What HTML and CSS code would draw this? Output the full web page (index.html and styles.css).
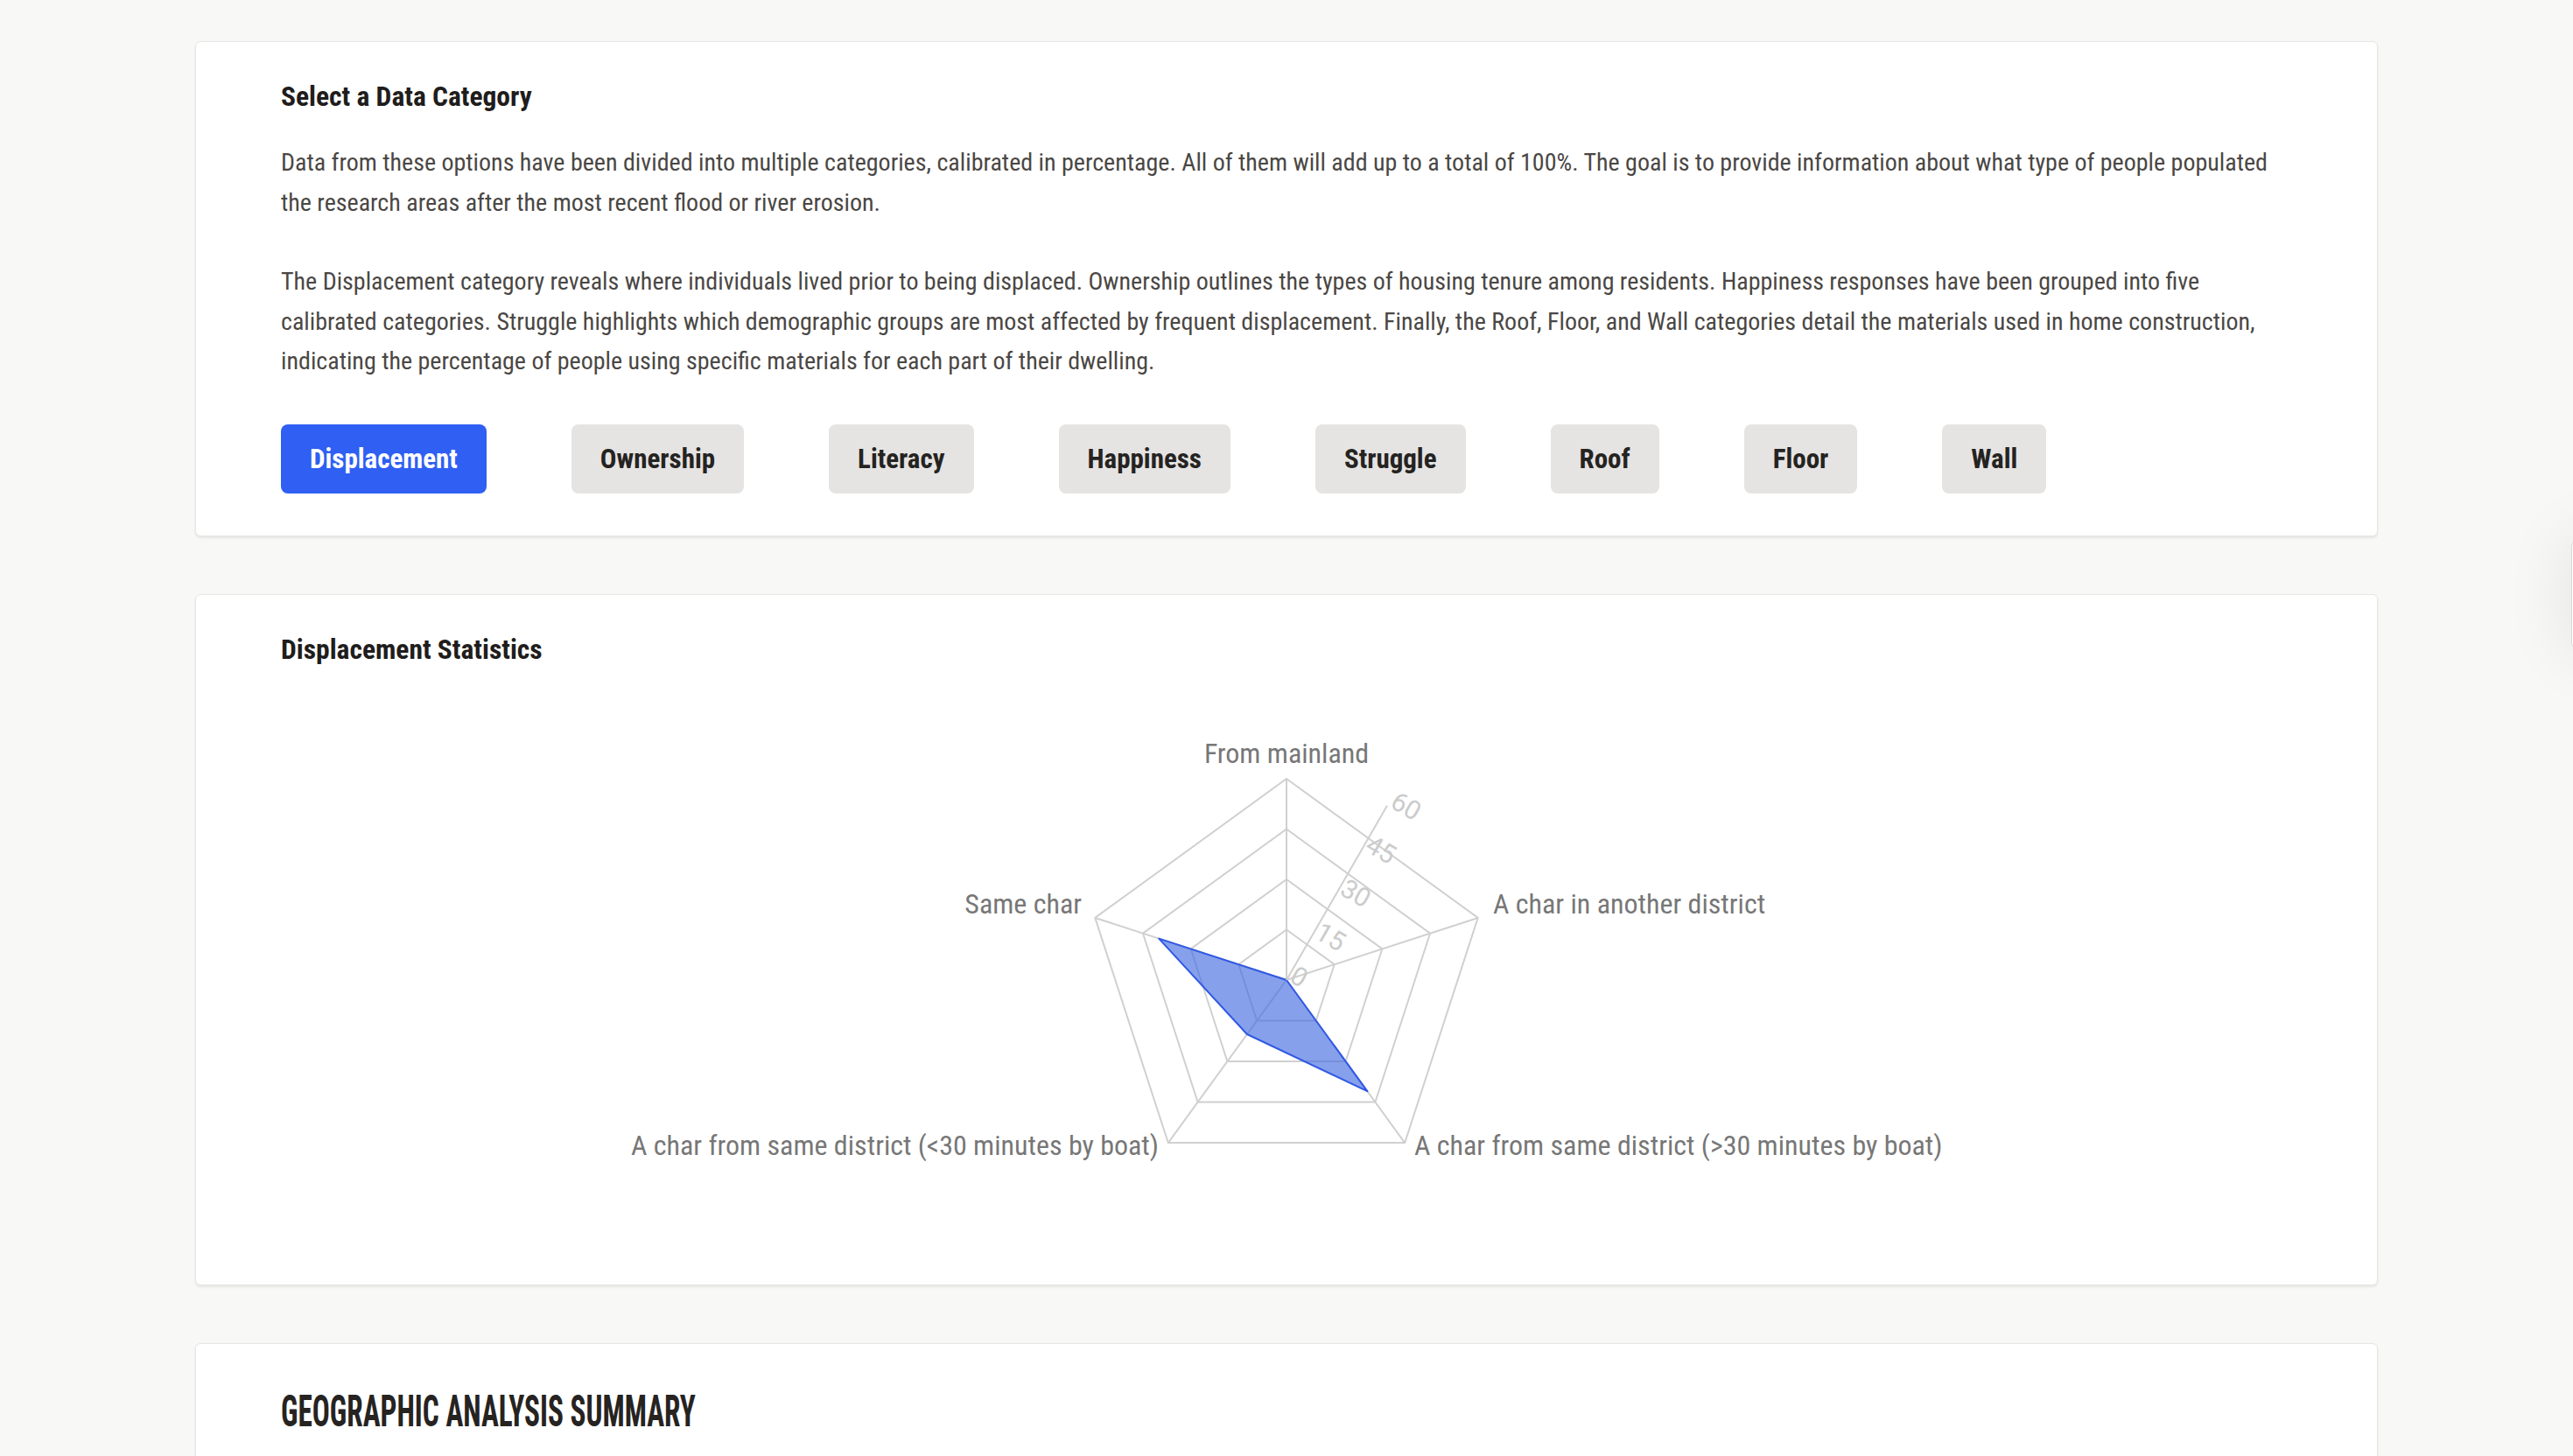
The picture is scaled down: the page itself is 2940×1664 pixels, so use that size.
FILE: index.html
```html
<!DOCTYPE html>
<html lang="en">
<head>
<meta charset="utf-8">
<title>Data Categories</title>
<link rel="stylesheet" href="styles.css">
</head>
<body>
<main class="page">
  <section class="card">
    <h2 class="card-title">Select a Data Category</h2>
    <p class="intro">Data from these options have been divided into multiple categories, calibrated in percentage. All of them will add up to a total of 100%. The goal is to provide information about what type of people populated the research areas after the most recent flood or river erosion.</p>
    <p class="intro last">The Displacement category reveals where individuals lived prior to being displaced. Ownership outlines the types of housing tenure among residents. Happiness responses have been grouped into five calibrated categories. Struggle highlights which demographic groups are most affected by frequent displacement. Finally, the Roof, Floor, and Wall categories detail the materials used in home construction, indicating the percentage of people using specific materials for each part of their dwelling.</p>
    <div class="btn-row">
      <button class="cat-btn active">Displacement</button>
      <button class="cat-btn">Ownership</button>
      <button class="cat-btn">Literacy</button>
      <button class="cat-btn">Happiness</button>
      <button class="cat-btn">Struggle</button>
      <button class="cat-btn">Roof</button>
      <button class="cat-btn">Floor</button>
      <button class="cat-btn">Wall</button>
    </div>
  </section>

  <section class="card">
    <h2 class="card-title">Displacement Statistics</h2>
    <svg class="radar" viewBox="0 14 2298 625" width="2298" height="625" xmlns="http://www.w3.org/2000/svg">
      <g class="grid">
        <polygon points="1149,281.5 1203.69,321.23 1182.80,385.52 1115.20,385.52 1094.31,321.23"/>
        <polygon points="1149,224 1258.37,303.46 1216.60,432.04 1081.40,432.04 1039.63,303.46"/>
        <polygon points="1149,166.5 1313.06,285.69 1250.39,478.56 1047.61,478.56 984.94,285.69"/>
        <polygon points="1149,109 1367.74,267.93 1284.19,525.07 1013.81,525.07 930.26,267.93"/>
        <line x1="1149" y1="339" x2="1149" y2="109"/>
        <line x1="1149" y1="339" x2="1367.74" y2="267.93"/>
        <line x1="1149" y1="339" x2="1284.19" y2="525.07"/>
        <line x1="1149" y1="339" x2="1013.81" y2="525.07"/>
        <line x1="1149" y1="339" x2="930.26" y2="267.93"/>
      </g>
      <polygon class="data" points="1149,339 1149,339 1241.38,466.15 1103.94,401.02 1003.17,291.62"/>
      <line class="raxis" x1="1149" y1="339" x2="1264" y2="139.8"/>
      <g class="ticks">
        <text transform="translate(1151,340) rotate(30)">0</text>
        <text transform="translate(1179.75,290.2) rotate(30)">15</text>
        <text transform="translate(1208.5,240.4) rotate(30)">30</text>
        <text transform="translate(1237.25,190.6) rotate(30)">45</text>
        <text transform="translate(1266,140.8) rotate(30)">60</text>
      </g>
      <g class="labels">
        <text x="1149" y="80" text-anchor="middle">From mainland</text>
        <text x="915" y="252" text-anchor="end">Same char</text>
        <text x="1385" y="252" text-anchor="start">A char in another district</text>
        <text x="1003" y="528" text-anchor="end">A char from same district (&lt;30 minutes by boat)</text>
        <text x="1295" y="528" text-anchor="start">A char from same district (&gt;30 minutes by boat)</text>
      </g>
    </svg>
  </section>

  <section class="card summary">
    <h2 class="summary-title">Geographic Analysis Summary</h2>
  </section>
</main>
<div class="side-panel"></div>
</body>
</html>
```

FILE: styles.css
```css
html, body {
  margin: 0;
  padding: 0;
  background: #f8f8f6;
}

body {
  font-family: "Roboto Condensed", "Liberation Sans Narrow", "DejaVu Sans Condensed", sans-serif;
  color: #222;
  overflow: hidden;
}

.page {
  width: 2494px;
  margin: 0 auto;
  padding-top: 47px;
  display: flex;
  flex-direction: column;
  gap: 66px;
}

.card {
  background: #fff;
  border: 1px solid #e6e6e4;
  border-radius: 6px;
  box-shadow: 0 2px 3px rgba(0, 0, 0, 0.08);
  padding: 46px 97px 48px;
}

.card-title {
  margin: 0 0 35px;
  font-size: 31.5px;
  line-height: 34px;
  font-weight: 700;
  color: #1f1d1c;
}

.intro {
  margin: 0 0 45px;
  font-size: 28px;
  line-height: 45.5px;
  color: #4a4744;
}

.intro.last {
  margin-bottom: 49px;
}

.btn-row {
  display: flex;
  gap: 97px;
}

.cat-btn {
  font-family: inherit;
  font-size: 31px;
  font-weight: 700;
  line-height: 35px;
  padding: 22px 33px;
  border: none;
  border-radius: 8px;
  background: #e5e4e3;
  color: #252321;
  cursor: pointer;
}

.cat-btn.active {
  background: #2f5ff3;
  color: #fff;
}

.radar {
  display: block;
  overflow: visible;
}

.grid polygon,
.grid line {
  fill: none;
  stroke: #d0d0d0;
  stroke-width: 2;
}

.data {
  fill: rgba(65, 105, 225, 0.63);
  stroke: #3059e3;
  stroke-width: 2;
  stroke-linejoin: round;
}

.raxis {
  stroke: #d0d0d0;
  stroke-width: 2;
}

.ticks text {
  font-family: "Roboto", "Liberation Sans", sans-serif;
  font-size: 30px;
  fill: #cbcbcb;
}

.labels text {
  font-family: "Roboto Condensed", "Liberation Sans Narrow", sans-serif;
  font-size: 32px;
  fill: #777;
  dominant-baseline: central;
}

.summary {
  min-height: 420px;
  padding-top: 48px;
}

.summary-title {
  margin: 0;
  display: inline-block;
  font-size: 50px;
  line-height: 58px;
  font-weight: 700;
  text-transform: uppercase;
  color: #262321;
  transform: scaleX(0.665);
  transform-origin: left center;
}

.side-panel {
  position: fixed;
  left: 2938px;
  top: 617px;
  width: 60px;
  height: 125px;
  background: #fff;
  border-left: 1px solid #d8d8d8;
  border-radius: 8px;
  box-shadow: 0 0 70px 10px rgba(0, 0, 0, 0.07);
}
```
